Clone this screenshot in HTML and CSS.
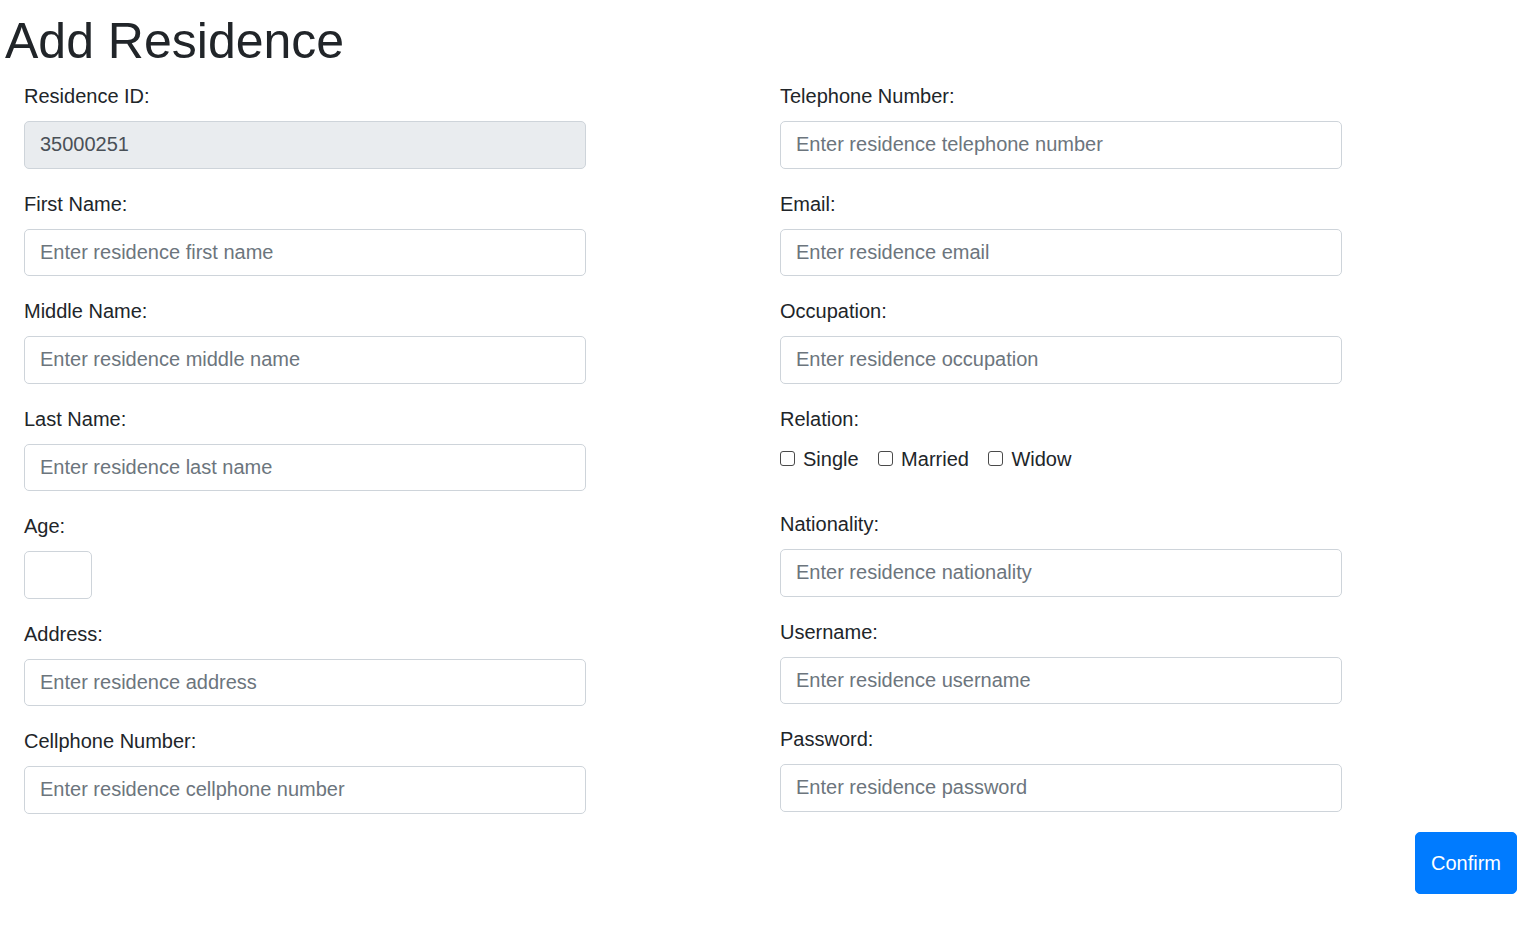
FILE: index.html
```html
<!DOCTYPE html>
<html lang="en">
<head>
<meta charset="utf-8">
<title>Add Residence</title>
<link rel="stylesheet" href="styles.css">
</head>
<body>
<div class="page">
  <h1 class="title">Add Residence</h1>
  <form class="form-grid">
    <div class="col">
      <div class="group">
        <label class="label">Residence ID:</label>
        <input class="field field-disabled" type="text" value="35000251" disabled>
      </div>
      <div class="group">
        <label class="label">First Name:</label>
        <input class="field" type="text" placeholder="Enter residence first name">
      </div>
      <div class="group">
        <label class="label">Middle Name:</label>
        <input class="field" type="text" placeholder="Enter residence middle name">
      </div>
      <div class="group">
        <label class="label">Last Name:</label>
        <input class="field" type="text" placeholder="Enter residence last name">
      </div>
      <div class="group">
        <label class="label">Age:</label>
        <input class="field field-age" type="text">
      </div>
      <div class="group">
        <label class="label">Address:</label>
        <input class="field" type="text" placeholder="Enter residence address">
      </div>
      <div class="group">
        <label class="label">Cellphone Number:</label>
        <input class="field" type="text" placeholder="Enter residence cellphone number">
      </div>
    </div>
    <div class="col">
      <div class="group">
        <label class="label">Telephone Number:</label>
        <input class="field" type="text" placeholder="Enter residence telephone number">
      </div>
      <div class="group">
        <label class="label">Email:</label>
        <input class="field" type="text" placeholder="Enter residence email">
      </div>
      <div class="group">
        <label class="label">Occupation:</label>
        <input class="field" type="text" placeholder="Enter residence occupation">
      </div>
      <div class="group">
        <label class="label">Relation:</label>
        <div class="checks">
          <label class="check"><input class="box" type="checkbox">Single</label>
          <label class="check"><input class="box" type="checkbox">Married</label>
          <label class="check"><input class="box" type="checkbox">Widow</label>
        </div>
      </div>
      <div class="group">
        <label class="label">Nationality:</label>
        <input class="field" type="text" placeholder="Enter residence nationality">
      </div>
      <div class="group">
        <label class="label">Username:</label>
        <input class="field" type="text" placeholder="Enter residence username">
      </div>
      <div class="group">
        <label class="label">Password:</label>
        <input class="field" type="password" placeholder="Enter residence password">
      </div>
    </div>
  </form>
  <div class="actions">
    <button class="btn" type="button">Confirm</button>
  </div>
</div>
</body>
</html>
```

FILE: styles.css
```css
* { box-sizing: border-box; }

body {
  margin: 0;
  font-family: "Liberation Sans", Arial, sans-serif;
  color: #212529;
  background: #fff;
}

.page {
  padding: 11px 19px 0 5px;
}

.title {
  margin: 0 0 10px;
  font-size: 50px;
  line-height: 60px;
  font-weight: 500;
}

.form-grid {
  display: grid;
  grid-template-columns: 562px 562px;
  column-gap: 194px;
  margin-left: 19px;
}

.col {
  display: flex;
  flex-direction: column;
}

.group {
  margin-bottom: 20px;
}

.label {
  display: block;
  font-size: 20px;
  line-height: 30px;
  margin-bottom: 10px;
}

.field {
  display: block;
  width: 100%;
  height: 47.5px;
  padding: 7.5px 15px;
  font-family: inherit;
  font-size: 20px;
  line-height: 30px;
  color: #495057;
  background: #fff;
  border: 1px solid #ced4da;
  border-radius: 5px;
  outline: none;
}

.field::placeholder {
  color: #6c757d;
  opacity: 1;
}

.field-disabled {
  background: #e9ecef;
  color: #495057;
}

.field-age {
  width: 68px;
}

.checks {
  display: flex;
  align-items: flex-start;
  height: 45.5px;
}

.check {
  display: flex;
  align-items: center;
  font-size: 20px;
  line-height: 30px;
  margin-right: 19.5px;
}

.box {
  appearance: none;
  -webkit-appearance: none;
  width: 15px;
  height: 15px;
  margin: 0 8px 0 0;
  border: 1px solid #4a4a4a;
  border-radius: 3px;
  background: #fff;
}

.actions {
  display: flex;
  justify-content: flex-end;
  margin-top: -2px;
}

.btn {
  width: 102px;
  height: 62px;
  padding: 0;
  font-family: inherit;
  font-size: 20px;
  line-height: 30px;
  color: #fff;
  background: #007bff;
  border: 1px solid #007bff;
  border-radius: 5px;
}
```
